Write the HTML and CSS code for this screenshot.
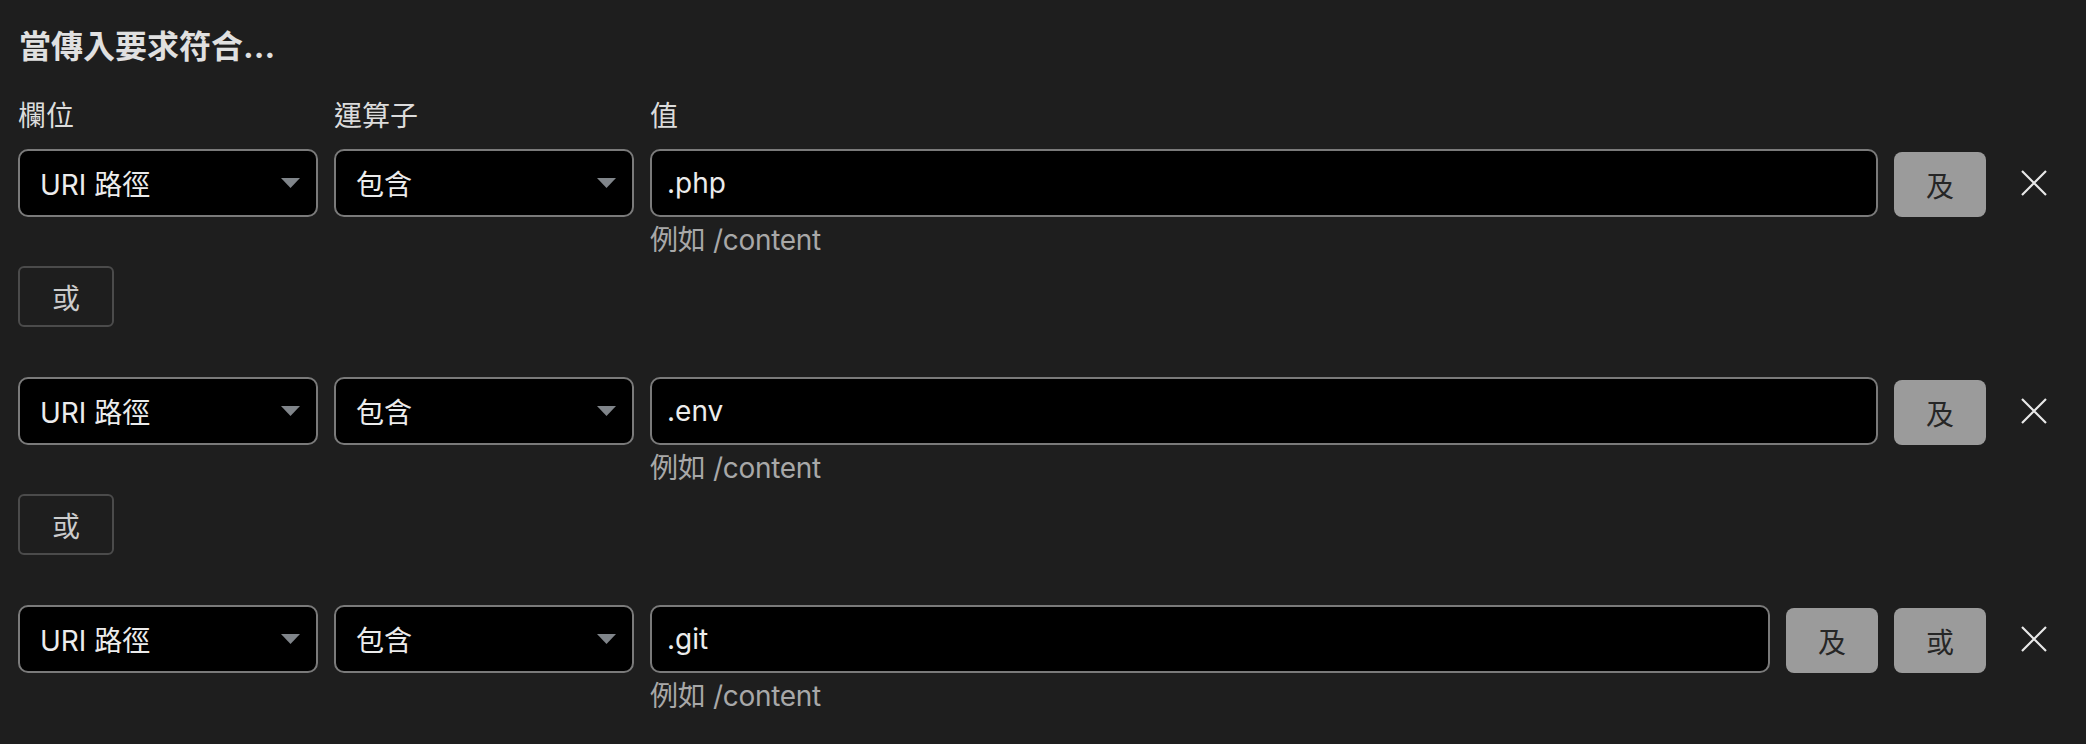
FILE: index.html
```html
<!DOCTYPE html>
<html lang="zh-Hant">
<head>
<meta charset="utf-8">
<title>規則</title>
<link rel="stylesheet" href="styles.css">
</head>
<body>
<div class="page">
  <h2 class="title">當傳入要求符合...</h2>

  <div class="labels">
    <span>欄位</span>
    <span>運算子</span>
    <span>值</span>
  </div>

  <div class="cond">
    <div class="select"><span>URI 路徑</span><svg class="caret" width="19" height="10" viewBox="0 0 19 10"><path d="M0 0H19L9.5 10Z"/></svg></div>
    <div class="select"><span>包含</span><svg class="caret" width="19" height="10" viewBox="0 0 19 10"><path d="M0 0H19L9.5 10Z"/></svg></div>
    <input class="value" type="text" value=".php">
    <div class="actions">
      <button class="btn-fill">及</button>
      <button class="x-btn" aria-label="移除"><svg width="26" height="26" viewBox="0 0 26 26"><path d="M1 1L25 25M25 1L1 25"/></svg></button>
    </div>
    <div class="hint">例如 /content</div>
  </div>
  <button class="or-btn">或</button>

  <div class="cond">
    <div class="select"><span>URI 路徑</span><svg class="caret" width="19" height="10" viewBox="0 0 19 10"><path d="M0 0H19L9.5 10Z"/></svg></div>
    <div class="select"><span>包含</span><svg class="caret" width="19" height="10" viewBox="0 0 19 10"><path d="M0 0H19L9.5 10Z"/></svg></div>
    <input class="value" type="text" value=".env">
    <div class="actions">
      <button class="btn-fill">及</button>
      <button class="x-btn" aria-label="移除"><svg width="26" height="26" viewBox="0 0 26 26"><path d="M1 1L25 25M25 1L1 25"/></svg></button>
    </div>
    <div class="hint">例如 /content</div>
  </div>
  <button class="or-btn">或</button>

  <div class="cond">
    <div class="select"><span>URI 路徑</span><svg class="caret" width="19" height="10" viewBox="0 0 19 10"><path d="M0 0H19L9.5 10Z"/></svg></div>
    <div class="select"><span>包含</span><svg class="caret" width="19" height="10" viewBox="0 0 19 10"><path d="M0 0H19L9.5 10Z"/></svg></div>
    <input class="value" type="text" value=".git">
    <div class="actions">
      <button class="btn-fill">及</button>
      <button class="btn-fill">或</button>
      <button class="x-btn" aria-label="移除"><svg width="26" height="26" viewBox="0 0 26 26"><path d="M1 1L25 25M25 1L1 25"/></svg></button>
    </div>
    <div class="hint">例如 /content</div>
  </div>
</div>
</body>
</html>
```
FILE: styles.css
```css
* {
  box-sizing: border-box;
}

body {
  margin: 0;
  background: #1e1e1e;
  font-family: Inter, "Noto Sans CJK TC", sans-serif;
  color: #e6e6e6;
}

.page {
  padding: 27px 20px 0 18px;
}

.title {
  margin: 0 0 31px 1px;
  font-size: 32px;
  line-height: 40px;
  font-weight: 700;
  color: #e0e0e0;
}

.labels {
  display: grid;
  grid-template-columns: 300px 300px 1fr;
  column-gap: 16px;
  font-size: 28px;
  line-height: 36px;
  color: #dcdcdc;
  margin-bottom: 15px;
}

.cond {
  display: grid;
  grid-template-columns: 300px 300px 1fr auto;
  column-gap: 16px;
  row-gap: 5px;
}

.select {
  height: 68px;
  background: #000;
  border: 2px solid #7a7a7a;
  border-radius: 10px;
  display: flex;
  align-items: center;
  justify-content: space-between;
  padding: 0 16px 0 20px;
  font-size: 28px;
  color: #ececec;
}

.caret path {
  fill: #80858a;
}

.value {
  width: 100%;
  height: 68px;
  background: #000;
  border: 2px solid #7a7a7a;
  border-radius: 10px;
  padding: 0 15px;
  font: 28px Inter, "Noto Sans CJK TC", sans-serif;
  color: #ececec;
  outline: none;
}

.actions {
  display: flex;
  align-items: center;
  gap: 16px;
  height: 68px;
}

.btn-fill {
  width: 92px;
  height: 65px;
  align-self: flex-end;
  background: #9b9b9b;
  border: none;
  border-radius: 8px;
  color: #262626;
  font: 28px "Noto Sans CJK TC", sans-serif;
  padding: 0;
}

.x-btn {
  width: 64px;
  height: 48px;
  display: flex;
  align-items: center;
  justify-content: center;
  background: none;
  border: none;
  padding: 0;
}

.x-btn path {
  stroke: #e8e8e8;
  stroke-width: 2.2;
  fill: none;
}

.hint {
  grid-column: 3;
  font-size: 28px;
  line-height: 36px;
  color: #a8a8a8;
  letter-spacing: -0.3px;
}

.or-btn {
  display: block;
  width: 96px;
  height: 61px;
  margin: 8px 0 50px;
  border: 2px solid #4b4b4b;
  border-radius: 6px;
  background: transparent;
  color: #cccccc;
  font: 28px "Noto Sans CJK TC", sans-serif;
  padding: 0;
}
```
